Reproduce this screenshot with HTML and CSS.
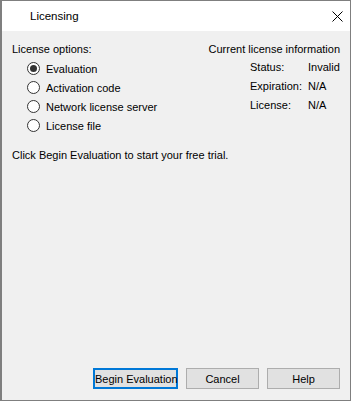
FILE: index.html
```html
<!DOCTYPE html>
<html>
<head>
<meta charset="utf-8">
<link rel="stylesheet" href="styles.css">
</head>
<body>
<div class="window">
  <div class="titlebar">
    <span class="title">Licensing</span>
    <svg class="close" width="11" height="11" viewBox="0 0 11 11"><path d="M0.5 0.5 L10.5 10.5 M10.5 0.5 L0.5 10.5" stroke="#000" stroke-width="1" fill="none"/></svg>
  </div>
  <div class="content">
    <div class="main">
      <div class="options">
        <div class="line">License options:</div>
        <div class="radios">
          <label class="radio"><span class="dot checked"></span>Evaluation</label>
          <label class="radio"><span class="dot"></span>Activation code</label>
          <label class="radio"><span class="dot"></span>Network license server</label>
          <label class="radio"><span class="dot"></span>License file</label>
        </div>
      </div>
      <div class="info">
        <div class="line">Current license information</div>
        <div class="table">
          <span>Status:</span><span>Invalid</span>
          <span>Expiration:</span><span>N/A</span>
          <span>License:</span><span>N/A</span>
        </div>
      </div>
    </div>
    <div class="hint">Click Begin Evaluation to start your free trial.</div>
    <div class="buttons">
      <button class="btn default">Begin Evaluation</button>
      <button class="btn">Cancel</button>
      <button class="btn">Help</button>
    </div>
  </div>
</div>
</body>
</html>
```

FILE: styles.css
```css
html, body {
  margin: 0;
  padding: 0;
  background: #ffffff;
}
body {
  font-family: "Liberation Sans", Arial, sans-serif;
  font-size: 11px;
  color: #000;
}
.window {
  box-sizing: border-box;
  width: 351px;
  height: 401px;
  border: 1px solid #7f7f7f;
  border-left-width: 2px;
  display: flex;
  flex-direction: column;
}
.titlebar {
  height: 30px;
  background: #fff;
  display: flex;
  align-items: center;
  justify-content: space-between;
  padding: 0 7px 0 28px;
}
.title {
  font-size: 11.5px;
}
.close {
  display: block;
}
.content {
  flex: 1;
  background: #f0f0f0;
  display: flex;
  flex-direction: column;
  padding: 9px 10px 11px 10px;
}
.main {
  display: flex;
  justify-content: space-between;
}
.line {
  line-height: 19px;
}
.radios {
  padding-left: 15px;
}
.radio {
  display: flex;
  align-items: center;
  height: 19px;
}
.dot {
  box-sizing: border-box;
  width: 13px;
  height: 13px;
  border: 1px solid #333;
  border-radius: 50%;
  background: #fff;
  margin-right: 6px;
  display: flex;
  align-items: center;
  justify-content: center;
}
.dot.checked::after {
  content: "";
  width: 7px;
  height: 7px;
  border-radius: 50%;
  background: #333;
}
.info {
  display: flex;
  flex-direction: column;
  align-items: flex-end;
}
.table {
  display: grid;
  grid-template-columns: 58px 32px;
  line-height: 19px;
  margin-top: -1px;
}
.hint {
  margin-top: 11px;
  line-height: 19px;
}
.buttons {
  margin-top: auto;
  display: flex;
  justify-content: flex-end;
  gap: 8px;
}
.btn {
  box-sizing: border-box;
  height: 21px;
  width: 73px;
  background: #e1e1e1;
  border: 1px solid #adadad;
  font-family: inherit;
  font-size: 11px;
  color: #000;
  padding: 0;
  margin: 0;
  white-space: nowrap;
}
.btn.default {
  width: 85px;
  border: 2px solid #0078d7;
}
```
